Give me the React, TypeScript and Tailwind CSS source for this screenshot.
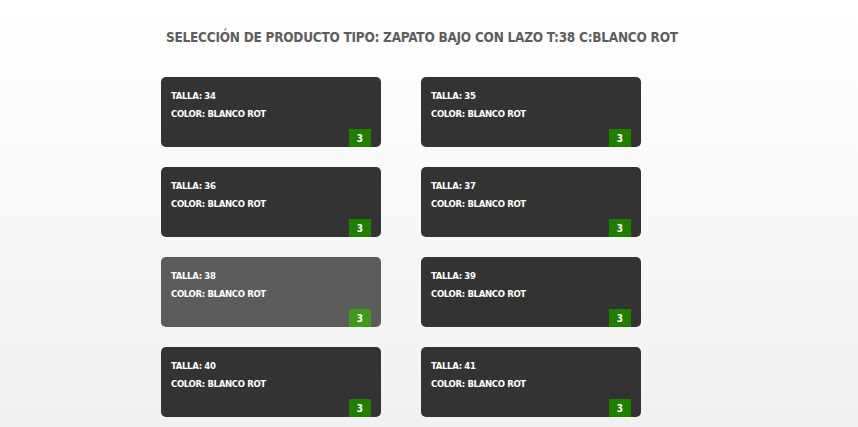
import React from "react";

const sizes = [34, 35, 36, 37, 38, 39, 40, 41];

function Card({ size, active }: { size: number; active?: boolean }) {
  return (
    <div
      className={`relative h-[70px] w-[220px] rounded-[5px] ${active ? "bg-[#5c5c5c]" : "bg-[#333333]"} pl-[10px] pt-[13px] text-white`}
    >
      <div className="text-[9.5px] leading-[12px] font-bold tracking-[-0.35px]">TALLA: {size}</div>
      <div className="mt-[6px] text-[9.5px] leading-[12px] font-bold tracking-[-0.35px]">COLOR: BLANCO ROT</div>
      <div
        className={`absolute right-[10px] bottom-0 flex h-[18px] w-[22px] items-center justify-center text-[10px] font-bold ${active ? "bg-[#3f9a1c]" : "bg-[#1f8000]"}`}
      >
        3
      </div>
    </div>
  );
}

export default function App() {
  return (
    <div
      className="h-[427px] w-[858px] overflow-hidden bg-gradient-to-b from-white to-[#f1f1f1]"
      style={{ fontFamily: '"DejaVu Sans Condensed", "DejaVu Sans", sans-serif' }}
    >
      <div className="pl-[166px] pt-[29px] text-[13.5px] leading-[16px] font-bold tracking-[-0.25px] text-[#5e5e5e]">
        SELECCIÓN DE PRODUCTO TIPO: ZAPATO BAJO CON LAZO T:38 C:BLANCO ROT
      </div>
      <div className="ml-[161px] mt-[32px] grid w-[480px] grid-cols-[220px_220px] gap-x-[40px] gap-y-[20px]">
        {sizes.map((s) => (
          <Card key={s} size={s} active={s === 38} />
        ))}
      </div>
    </div>
  );
}
